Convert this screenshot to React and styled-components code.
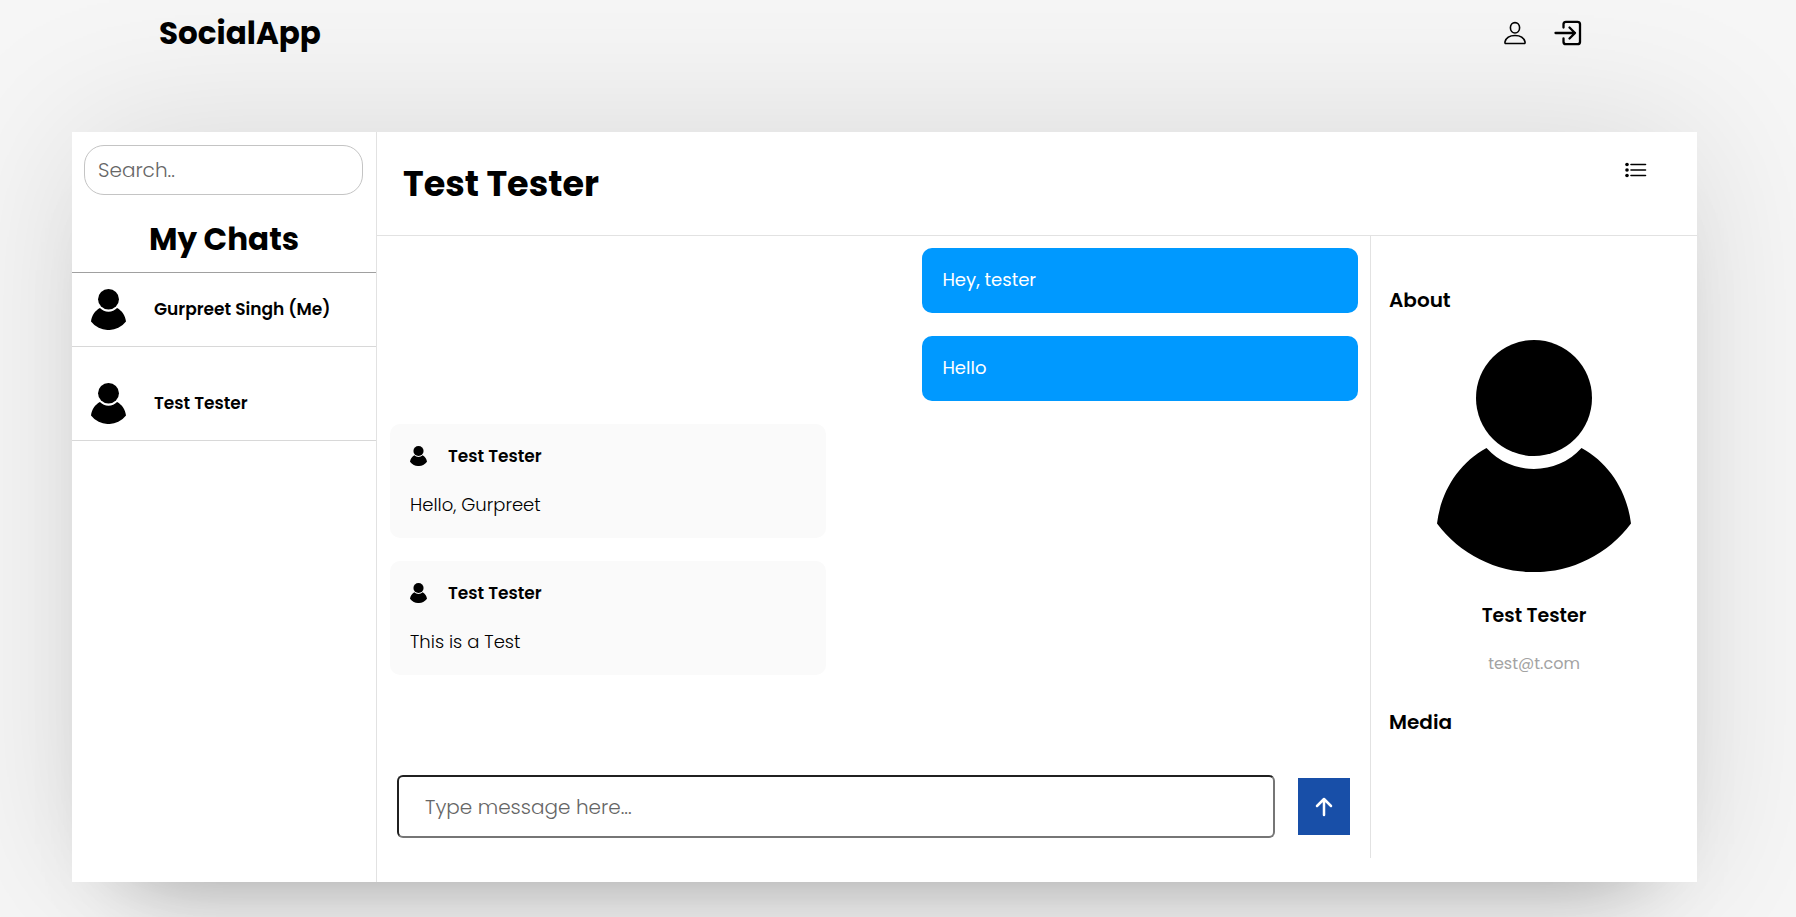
import React from "react";
import styled, { createGlobalStyle } from "styled-components";

const GlobalStyle = createGlobalStyle`
  *, *::before, *::after { box-sizing: border-box; }
  html, body { margin: 0; }
  body {
    background: #f6f6f6;
    color: #000;
    font-family: Poppins, Inter, "Liberation Sans", sans-serif;
    overflow-x: hidden;
  }
  h1, h2, h3, p, ul { margin: 0; padding: 0; }
  button, input { font: inherit; }
`;

const Page = styled.div`
  min-height: 100vh;
  display: flex;
  flex-direction: column;
  overflow: hidden;
  padding-bottom: 35px;
`;

const TopBar = styled.header`
  display: flex;
  align-items: center;
  justify-content: space-between;
  height: 66px;
  padding: 0 214px 0 159px;
  margin-bottom: 66px;
`;

const Brand = styled.a`
  color: inherit;
  text-decoration: none;
  font-size: 31px;
  font-weight: 700;
  line-height: 48px;
`;

const TopActions = styled.nav`
  display: flex;
  align-items: center;
  gap: 28px;
`;

const IconButton = styled.button`
  display: flex;
  padding: 0;
  border: 0;
  background: none;
  color: inherit;
  cursor: pointer;
`;

const Card = styled.main`
  flex: 1;
  display: flex;
  min-height: 750px;
  margin: 0 99px 0 72px;
  background: #fff;
  box-shadow:
    0 0 150px rgba(0, 0, 0, 0.12),
    0 50px 80px -60px rgba(0, 0, 0, 0.36);
`;

const Sidebar = styled.aside`
  flex: 0 0 305px;
  border-right: 1px solid #e2e2e2;
`;

const SearchInput = styled.input`
  display: block;
  width: calc(100% - 25px);
  height: 50px;
  margin: 13px 12px 0;
  padding: 0 13px;
  border: 1px solid #c4c4c4;
  border-radius: 20px;
  background: #fff;
  font-size: 20px;
  font-weight: 300;
  &::placeholder { color: #666; opacity: 1; }
`;

const SidebarTitle = styled.h2`
  margin-top: 20px;
  padding-bottom: 9px;
  border-bottom: 1px solid #a0a0a0;
  font-size: 31px;
  font-weight: 700;
  line-height: 48px;
  text-align: center;
`;

const ChatList = styled.ul`
  display: flex;
  flex-direction: column;
  gap: 20px;
  list-style: none;
`;

const ChatItem = styled.li`
  display: flex;
  align-items: center;
  gap: 28px;
  height: 74px;
  padding: 0 19px 1px;
  border-bottom: 1px solid #d8d8d8;
  font-size: 17px;
  font-weight: 600;
`;

const Conversation = styled.section`
  flex: 1;
  min-width: 0;
  display: flex;
  flex-direction: column;
  padding-bottom: 24px;
`;

const ConversationHeader = styled.header`
  display: flex;
  justify-content: space-between;
  align-items: flex-start;
  height: 104px;
  padding: 30px 50px 0 26px;
  border-bottom: 1px solid #e2e2e2;
`;

const ConversationTitle = styled.h1`
  font-size: 35px;
  font-weight: 700;
  line-height: 44px;
`;

const ConversationBody = styled.div`
  flex: 1;
  display: flex;
`;

const Thread = styled.div`
  flex: 1;
  min-width: 0;
  display: flex;
  flex-direction: column;
  justify-content: space-between;
  padding: 12px 12px 20px 13px;
  border-right: 1px solid #e2e2e2;
`;

const Messages = styled.div`
  display: flex;
  flex-direction: column;
  gap: 23px;
`;

const Bubble = styled.article`
  width: 45%;
  align-self: ${(p) => (p.$own ? "flex-end" : "flex-start")};
  padding: 19px 20px 20px;
  border-radius: 10px;
  background: ${(p) => (p.$own ? "#0099ff" : "#fafafa")};
  color: ${(p) => (p.$own ? "#fff" : "#000")};
  font-size: 18px;
  font-weight: ${(p) => (p.$own ? 400 : 300)};
  line-height: 26px;
`;

const Sender = styled.div`
  display: flex;
  align-items: center;
  gap: 21px;
  margin-bottom: 23px;
  font-size: 17px;
  font-weight: 600;
`;

const Composer = styled.form`
  display: flex;
  align-items: center;
  gap: 23px;
  padding: 0 8px 0 7px;
`;

const MessageInput = styled.input`
  flex: 1;
  min-width: 0;
  height: 63px;
  padding: 0 26px;
  border: 2px solid;
  border-color: #202020 #767676 #767676 #202020;
  border-radius: 6px;
  background: #fff;
  font-size: 20px;
  font-weight: 300;
  &::placeholder { color: #666; opacity: 1; }
`;

const SendButton = styled.button`
  display: flex;
  align-items: center;
  justify-content: center;
  width: 52px;
  height: 57px;
  padding: 0;
  border: 0;
  background: #184fa8;
  color: #fff;
  cursor: pointer;
`;

const Profile = styled.aside`
  flex: 0 0 326px;
  display: flex;
  flex-direction: column;
  align-items: center;
  padding: 48px 18px 0;
`;

const ProfileHeading = styled.h2`
  align-self: flex-start;
  font-size: 20px;
  font-weight: 600;
  line-height: 32px;
`;

const ProfileAvatar = styled.div`
  display: flex;
  margin: 24px 0 28px;
`;

const ProfileName = styled.h3`
  font-size: 19px;
  font-weight: 600;
  line-height: 32px;
`;

const ProfileEmail = styled.p`
  margin: 16px 0 26px;
  color: #a3a3a3;
  font-size: 16px;
  line-height: 32px;
`;

function Avatar({ width, height }) {
  return (
    <svg width={width} height={height} viewBox="0 0 194 232" preserveAspectRatio="none" aria-hidden="true">
      <circle cx="97" cy="58" r="58" />
      <path d="M49.500 108A64.200 64.200 0 0 0 144.500 108C172 123 190 151 194 183.500A121 121 0 0 1 0 183.500C4 151 22 123 49.500 108Z" />
    </svg>
  );
}

function UserIcon() {
  return (
    <svg width="22" height="24" viewBox="0 0 22 24" fill="none" stroke="currentColor" strokeWidth="1.600" aria-hidden="true">
      <ellipse cx="11" cy="6.800" rx="4.600" ry="5.200" />
      <path d="M2 22.500C1 22.500.8 21.800 1 20.800C2 17 6 14.500 11 14.500S20 17 21 20.800C21.200 21.800 21 22.500 20 22.500Z" />
    </svg>
  );
}

function LoginIcon() {
  return (
    <svg width="28" height="26" viewBox="0 0 28 26" fill="none" stroke="currentColor" strokeWidth="2.300" strokeLinecap="round" strokeLinejoin="round" aria-hidden="true">
      <path d="M9.500 7.500V4A2.500 2.500 0 0 1 12 1.800H23.500A2.500 2.500 0 0 1 26 4V22A2.500 2.500 0 0 1 23.500 24.200H12A2.500 2.500 0 0 1 9.500 22V18.500M1.500 13H21M15.500 7.500L21 13L15.500 18.500" />
    </svg>
  );
}

function ListIcon() {
  return (
    <svg width="22" height="16" viewBox="0 0 22 16" aria-hidden="true">
      <path d="M6 2.500H20.500M6 8H20.500M6 13.500H20.500" fill="none" stroke="currentColor" strokeWidth="1.600" strokeLinecap="round" />
      <circle cx="2" cy="2.500" r="1.800" />
      <circle cx="2" cy="8" r="1.800" />
      <circle cx="2" cy="13.500" r="1.800" />
    </svg>
  );
}

function ArrowUpIcon() {
  return (
    <svg width="18" height="20" viewBox="0 0 18 20" fill="none" stroke="currentColor" strokeWidth="2.500" strokeLinecap="round" strokeLinejoin="round" aria-hidden="true">
      <path d="M9 18V2M2 9L9 2L16 9" />
    </svg>
  );
}

const CHATS = ["Gurpreet Singh (Me)", "Test Tester"];

const MESSAGES = [
  { text: "Hey, tester", own: true },
  { text: "Hello", own: true },
  { text: "Hello, Gurpreet", sender: "Test Tester" },
  { text: "This is a Test", sender: "Test Tester" },
];

export default function App() {
  return (
    <Page>
      <GlobalStyle />
      <TopBar>
        <Brand href="#">SocialApp</Brand>
        <TopActions>
          <IconButton type="button" aria-label="Profile"><UserIcon /></IconButton>
          <IconButton type="button" aria-label="Log out"><LoginIcon /></IconButton>
        </TopActions>
      </TopBar>
      <Card>
        <Sidebar>
          <SearchInput type="search" placeholder="Search.." aria-label="Search chats" />
          <SidebarTitle>My Chats</SidebarTitle>
          <ChatList>
            {CHATS.map((name) => (
              <ChatItem key={name}>
                <Avatar width={35} height={41} />
                {name}
              </ChatItem>
            ))}
          </ChatList>
        </Sidebar>
        <Conversation>
          <ConversationHeader>
            <ConversationTitle>Test Tester</ConversationTitle>
            <IconButton type="button" aria-label="Conversation details"><ListIcon /></IconButton>
          </ConversationHeader>
          <ConversationBody>
            <Thread>
              <Messages>
                {MESSAGES.map((m) => (
                  <Bubble key={m.text} $own={m.own}>
                    {m.sender && (
                      <Sender>
                        <Avatar width={17} height={20} />
                        {m.sender}
                      </Sender>
                    )}
                    <p>{m.text}</p>
                  </Bubble>
                ))}
              </Messages>
              <Composer onSubmit={(e) => e.preventDefault()}>
                <MessageInput type="text" placeholder="Type message here..." aria-label="Message" />
                <SendButton type="submit" aria-label="Send"><ArrowUpIcon /></SendButton>
              </Composer>
            </Thread>
            <Profile>
              <ProfileHeading>About</ProfileHeading>
              <ProfileAvatar><Avatar width={194} height={232} /></ProfileAvatar>
              <ProfileName>Test Tester</ProfileName>
              <ProfileEmail>test@t.com</ProfileEmail>
              <ProfileHeading>Media</ProfileHeading>
            </Profile>
          </ConversationBody>
        </Conversation>
      </Card>
    </Page>
  );
}
